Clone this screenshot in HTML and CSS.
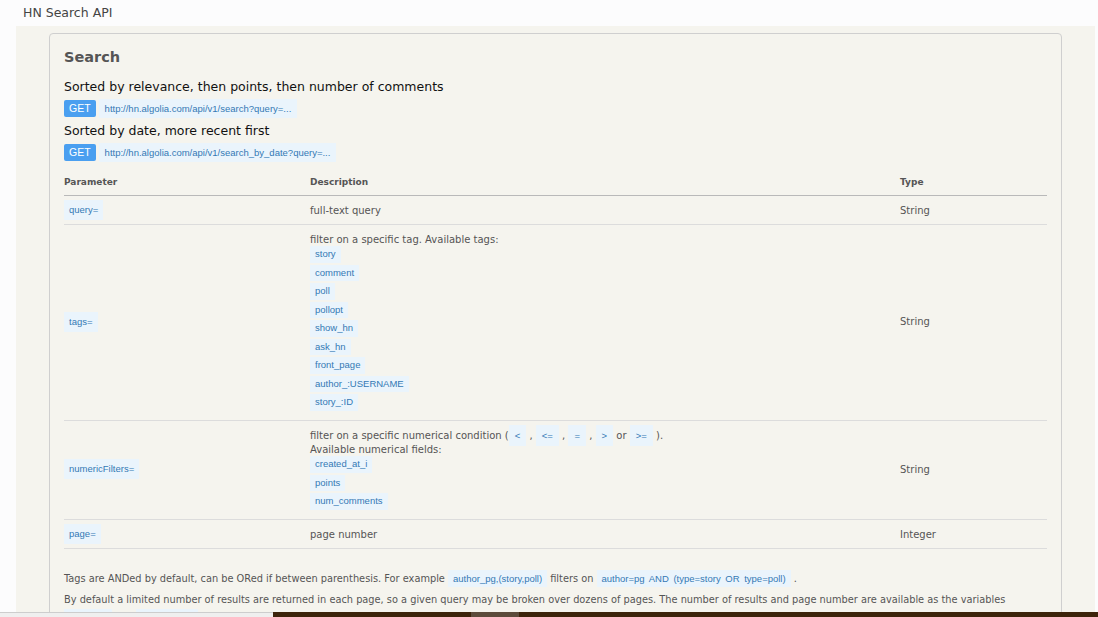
FILE: index.html
```html
<!DOCTYPE html>
<html lang="en">
<head>
<meta charset="utf-8">
<title>HN Search API</title>
<link rel="stylesheet" href="styles.css">
</head>
<body>
<header class="topbar">HN Search API</header>
<main class="page">
  <section class="panel">
    <h2 class="title">Search</h2>
    <p class="sort">Sorted by relevance, then points, then number of comments</p>
    <div class="endpoint"><span class="verb">GET</span><code class="url">http://hn.algolia.com/api/v1/search?query=...</code></div>
    <p class="sort">Sorted by date, more recent first</p>
    <div class="endpoint"><span class="verb">GET</span><code class="url">http://hn.algolia.com/api/v1/search_by_date?query=...</code></div>

    <table class="params">
      <colgroup><col class="c1"><col class="c2"><col class="c3"></colgroup>
      <thead>
        <tr><th>Parameter</th><th>Description</th><th>Type</th></tr>
      </thead>
      <tbody>
        <tr class="simple">
          <td><code class="pchip">query=</code></td>
          <td>full-text query</td>
          <td>String</td>
        </tr>
        <tr class="multi">
          <td><code class="pchip">tags=</code></td>
          <td>
            <div class="desc">filter on a specific tag. Available tags:</div>
            <div class="chips">
              <code class="chip">story</code>
              <code class="chip">comment</code>
              <code class="chip">poll</code>
              <code class="chip">pollopt</code>
              <code class="chip">show_hn</code>
              <code class="chip">ask_hn</code>
              <code class="chip">front_page</code>
              <code class="chip">author_:USERNAME</code>
              <code class="chip">story_:ID</code>
            </div>
          </td>
          <td>String</td>
        </tr>
        <tr class="multi">
          <td><code class="pchip">numericFilters=</code></td>
          <td>
            <div class="desc">filter on a specific numerical condition (<code class="op">&lt;</code> , <code class="op">&lt;=</code> , <code class="op">=</code> , <code class="op">&gt;</code> or <code class="op">&gt;=</code> ).<br>Available numerical fields:</div>
            <div class="chips">
              <code class="chip">created_at_i</code>
              <code class="chip">points</code>
              <code class="chip">num_comments</code>
            </div>
          </td>
          <td>String</td>
        </tr>
        <tr class="simple">
          <td><code class="pchip">page=</code></td>
          <td>page number</td>
          <td>Integer</td>
        </tr>
      </tbody>
    </table>

    <p class="note">Tags are ANDed by default, can be ORed if between parenthesis. For example <code class="ichip">author_pg,(story,poll)</code> filters on <code class="ichip wide">author=pg AND (type=story OR type=poll)</code> .</p>
    <p class="note">By default a limited number of results are returned in each page, so a given query may be broken over dozens of pages. The number of results and page number are available as the variables <code class="ichip">nbPages</code> and <code class="ichip">hitsPerPage</code> respectively. In the case you need more results, use the page parameter to iterate over the available pages, up to a maximum according to the number of results.</p>
  </section>
</main>
<div class="hbar"><div class="hbar-left"></div><div class="hbar-right"><span class="thumb"></span></div></div>
</body>
</html>
```
FILE: styles.css
```css
html, body {
  margin: 0;
  padding: 0;
}
body {
  background: #fcfcfd;
  font-family: "DejaVu Sans", Verdana, sans-serif;
  color: #555;
  overflow: hidden;
  height: 617px;
}
.topbar {
  height: 26px;
  line-height: 25px;
  padding-left: 23px;
  font-size: 12.5px;
  color: #444;
}
.page {
  margin: 0 3px 0 16px;
  background: #f5f4ee;
  padding: 7px 33px 0 33px;
  height: 700px;
}
.panel {
  border: 1px solid #cfcfcf;
  border-radius: 4px;
  padding: 0 14px;
  height: 800px;
}
.title {
  margin: 0;
  padding-top: 13px;
  font-size: 14.5px;
  line-height: 20px;
  font-weight: bold;
  color: #555;
}
.sort {
  margin: 0;
  font-size: 12.5px;
  line-height: 20px;
  color: #111;
}
.title + .sort {
  margin-top: 10px;
}
.endpoint {
  display: flex;
  align-items: center;
  gap: 3px;
  height: 19px;
  margin: 2px 0 3px;
}
.verb {
  display: inline-block;
  background: #4a9ff0;
  color: #fff;
  font-family: "Liberation Sans", Arial, sans-serif;
  font-size: 10.5px;
  height: 17px;
  line-height: 17px;
  padding: 0 5px;
  border-radius: 2px;
}
code {
  font-family: "Liberation Sans", Arial, sans-serif;
  font-size: 9.5px;
  color: #3479b5;
  background: #eaf4fc;
}
.url {
  display: inline-block;
  height: 19px;
  line-height: 19px;
  padding: 0 6px;
}
.params {
  width: 100%;
  border-collapse: collapse;
  margin-top: 13px;
}
.c1 { width: 246px; }
.c2 { width: 590px; }
.params th {
  text-align: left;
  font-size: 9px;
  font-weight: bold;
  color: #555;
  line-height: 14px;
  padding: 0 0 6px;
  border-bottom: 1px solid #b9b9b9;
}
.params td {
  font-size: 10px;
  color: #555;
  padding: 0;
  vertical-align: middle;
  border-bottom: 1px solid #dcdcdc;
}
.simple td {
  padding: 4px 0;
  height: 20px;
}
.multi td {
  padding: 8px 0 9.5px;
}
.pchip {
  display: inline-block;
  height: 20px;
  line-height: 20px;
  padding: 0 5px;
  vertical-align: middle;
}
.desc {
  line-height: 14px;
}
.chips {
  display: flex;
  flex-direction: column;
  align-items: flex-start;
  gap: 2px;
  margin-top: -1px;
}
.chip {
  display: block;
  height: 16.5px;
  line-height: 16.5px;
  padding: 0 5px;
}
.op {
  padding: 5px 6px;
  line-height: 10px;
}
.note {
  margin: 0 0 3px;
  font-size: 9.8px;
  line-height: 18px;
  color: #555;
}
.params + .note {
  margin-top: 21px;
}
.ichip {
  padding: 3px 5px;
  line-height: 10px;
}
.wide {
  word-spacing: 2px;
}
.hbar {
  position: fixed;
  left: 0;
  right: 0;
  bottom: 0;
  height: 5px;
  display: flex;
}
.hbar-left {
  width: 273px;
  background: #efefef;
  border-top: 1px solid #cdcdcd;
}
.hbar-right {
  flex: 1;
  background: #3d240b;
  position: relative;
}
.thumb {
  position: absolute;
  left: 198px;
  top: 0;
  width: 48px;
  height: 100%;
  background: #5c4b3b;
}
```
